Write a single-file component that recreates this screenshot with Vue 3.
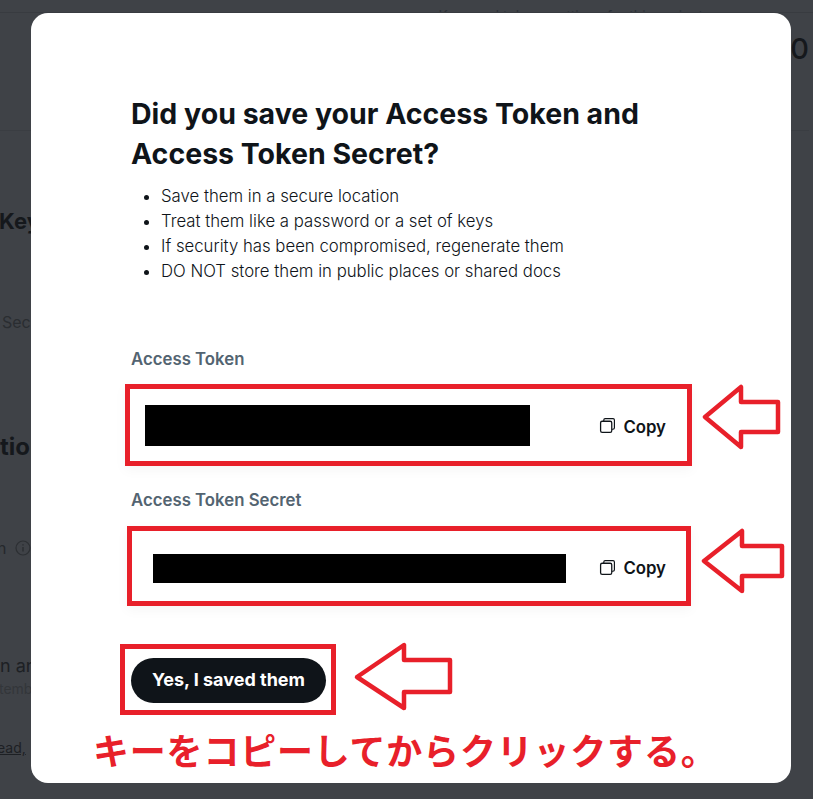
<script setup>
const tips = [
  'Save them in a secure location',
  'Treat them like a password or a set of keys',
  'If security has been compromised, regenerate them',
  'DO NOT store them in public places or shared docs'
]

// 手書きの矢印（絶対座標）
const arrows = [
  '705,417 741,387 741,402 778,402 778,432 741,432 741,447',
  '704,561 742,531 742,546 782,546 782,576 742,576 742,591',
  '357,677 404,645 404,660 450,660 450,692 404,692 404,708'
]
</script>

<template>
  <div class="page">
    <!-- dimmed page behind the dialog -->
    <div class="backdrop">
      <div class="strip"><span class="cut-text">Keys and tokens settings for this project</span></div>
      <div class="stats">0</div>
      <div class="bg-row key">Keys</div>
      <div class="bg-row sec">Secret</div>
      <div class="bg-row auth">tion</div>
      <div class="bg-row info">
        n
        <svg class="info-icon" viewBox="0 0 16 16">
          <circle cx="8" cy="8" r="7" fill="none" stroke="currentColor" stroke-width="1.2" />
          <path d="M8 7v4.5M8 4.2v1.4" fill="none" stroke="currentColor" stroke-width="1.5" />
        </svg>
      </div>
      <div class="bg-row plain">n and</div>
      <div class="bg-row sub">temb</div>
      <div class="bg-row read">ead,</div>
    </div>

    <div class="modal">
      <h1 class="title">Did you save your Access Token and<br />Access Token Secret?</h1>
      <ul class="tips">
        <li v-for="tip in tips" :key="tip">{{ tip }}</li>
      </ul>

      <div class="label first">Access Token</div>
      <div class="token-box box-one">
        <div class="mask mask-one"></div>
        <span class="copy">
          <svg class="copy-icon" viewBox="0 0 16 16">
            <path d="M4.5 4V2.8A1.3 1.3 0 0 1 5.8 1.5h7.4a1.3 1.3 0 0 1 1.3 1.3v7.4a1.3 1.3 0 0 1-1.3 1.3H12" fill="none" stroke="currentColor" stroke-width="1.1" />
            <rect x="1.5" y="4" width="10.5" height="10.5" rx="1.5" fill="none" stroke="currentColor" stroke-width="1.2" />
          </svg>
          Copy
        </span>
      </div>

      <div class="label second">Access Token Secret</div>
      <div class="token-box box-two">
        <div class="mask mask-two"></div>
        <span class="copy">
          <svg class="copy-icon" viewBox="0 0 16 16">
            <path d="M4.5 4V2.8A1.3 1.3 0 0 1 5.8 1.5h7.4a1.3 1.3 0 0 1 1.3 1.3v7.4a1.3 1.3 0 0 1-1.3 1.3H12" fill="none" stroke="currentColor" stroke-width="1.1" />
            <rect x="1.5" y="4" width="10.5" height="10.5" rx="1.5" fill="none" stroke="currentColor" stroke-width="1.2" />
          </svg>
          Copy
        </span>
      </div>

      <div class="button-box">
        <button class="saved-btn">Yes, I saved them</button>
      </div>
    </div>

    <!-- 赤い注釈 -->
    <svg class="arrows" viewBox="0 0 813 799">
      <polygon v-for="points in arrows" :key="points" :points="points" />
    </svg>
    <div class="note">キーをコピーしてからクリックする。</div>
  </div>
</template>

<style>
html,
body {
  margin: 0;
  background: #3f4247;
}
</style>

<style scoped>
.page {
  position: relative;
  width: 813px;
  height: 799px;
  overflow: hidden;
  background: #3f4247;
  font-family: Inter, "Noto Sans", "Liberation Sans", sans-serif;
  color: #0f1419;
}

.backdrop {
  display: flex;
  flex-direction: column;
  height: 100%;
  color: #15181c;
}

.strip {
  height: 12px;
  border-bottom: 1px solid #383b40;
  overflow: hidden;
  display: flex;
  align-items: flex-end;
  justify-content: flex-end;
  padding-right: 110px;
}

.cut-text {
  font-size: 14px;
  line-height: 14px;
  margin-bottom: -11px;
  color: #2b3036;
}

.stats {
  height: 117px;
  border-bottom: 1px solid #3a3d42;
  text-align: right;
  font-size: 29px;
  font-weight: 500;
  line-height: 72px;
  margin-right: 4px;
}

.bg-row {
  white-space: nowrap;
}

.key {
  margin-top: 75px;
  margin-left: -1px;
  font-size: 22px;
  font-weight: 700;
  line-height: 30px;
}

.sec {
  margin-top: 76px;
  margin-left: 2px;
  font-size: 16px;
  line-height: 20px;
  color: #2a2d31;
}

.auth {
  margin-top: 100px;
  font-size: 24px;
  font-weight: 700;
  line-height: 30px;
}

.info {
  margin-top: 76px;
  margin-left: -3px;
  display: flex;
  align-items: center;
  gap: 9px;
  font-size: 16px;
  line-height: 20px;
  color: #25282c;
}

.info-icon {
  width: 16px;
  height: 16px;
  color: #2c2f33;
}

.plain {
  margin-top: 96px;
  font-size: 18px;
  line-height: 24px;
  color: #1d2024;
}

.sub {
  margin-top: 1px;
  margin-left: -1px;
  font-size: 14px;
  line-height: 20px;
  color: #33363a;
}

.read {
  margin-top: 39px;
  margin-left: -3px;
  font-size: 14px;
  line-height: 20px;
  color: #1d2024;
  text-decoration: underline;
}

.modal {
  position: absolute;
  left: 31px;
  top: 13px;
  width: 760px;
  height: 770px;
  box-sizing: border-box;
  padding: 81px 100px 0;
  background: #fff;
  border-radius: 17px;
}

.title {
  margin: 0;
  font-size: 28.5px;
  font-weight: 700;
  line-height: 40px;
  white-space: nowrap;
}

.tips {
  margin: 10px 0 0;
  padding-left: 30px;
  font-size: 16.75px;
  font-weight: 300;
  line-height: 25px;
}

.label {
  font-size: 16.8px;
  font-weight: 600;
  line-height: 20px;
  color: #536471;
}

.first {
  margin-top: 65px;
}

.second {
  margin-top: 24px;
}

.token-box {
  display: flex;
  align-items: center;
  justify-content: space-between;
  margin-top: 15px;
  box-sizing: border-box;
  border: 5px solid #e8202a;
  box-shadow: 0 4px 12px rgba(0, 0, 0, 0.04);
}

.box-one {
  width: 567px;
  height: 82px;
  margin-left: -6px;
  padding: 0 21px 0 15px;
}

.box-two {
  width: 564px;
  height: 80px;
  margin-top: 16px;
  margin-left: -4px;
  padding: 5px 20px 0 21px;
}

.mask {
  background: #000;
}

.mask-one {
  width: 385px;
  height: 41px;
}

.mask-two {
  width: 413px;
  height: 29px;
}

.copy {
  display: flex;
  align-items: center;
  gap: 7px;
  font-size: 16.8px;
  font-weight: 600;
  line-height: 20px;
  margin-top: 3px;
}

.box-two .copy {
  margin-top: -1px;
}

.copy-icon {
  width: 17px;
  height: 17px;
  margin-top: -2px;
}

.button-box {
  box-sizing: border-box;
  width: 216px;
  height: 71px;
  margin-top: 38px;
  margin-left: -11px;
  padding: 9px 0 0 6px;
  border: 5px solid #e8202a;
}

.saved-btn {
  display: block;
  width: 195px;
  height: 45px;
  padding: 0 0 2px;
  border: none;
  border-radius: 23px;
  background: #0f1419;
  color: #fff;
  font-family: inherit;
  font-size: 18px;
  font-weight: 700;
}

.arrows {
  position: absolute;
  left: 0;
  top: 0;
  width: 813px;
  height: 799px;
  pointer-events: none;
}

.arrows polygon {
  fill: none;
  stroke: #e8202a;
  stroke-width: 4.5;
  stroke-linejoin: round;
}

.note {
  position: absolute;
  left: 93px;
  top: 727px;
  font-family: "Noto Sans CJK JP", sans-serif;
  font-size: 36px;
  font-weight: 700;
  line-height: 44px;
  letter-spacing: 0.8px;
  color: #e8202a;
  white-space: nowrap;
}
</style>
